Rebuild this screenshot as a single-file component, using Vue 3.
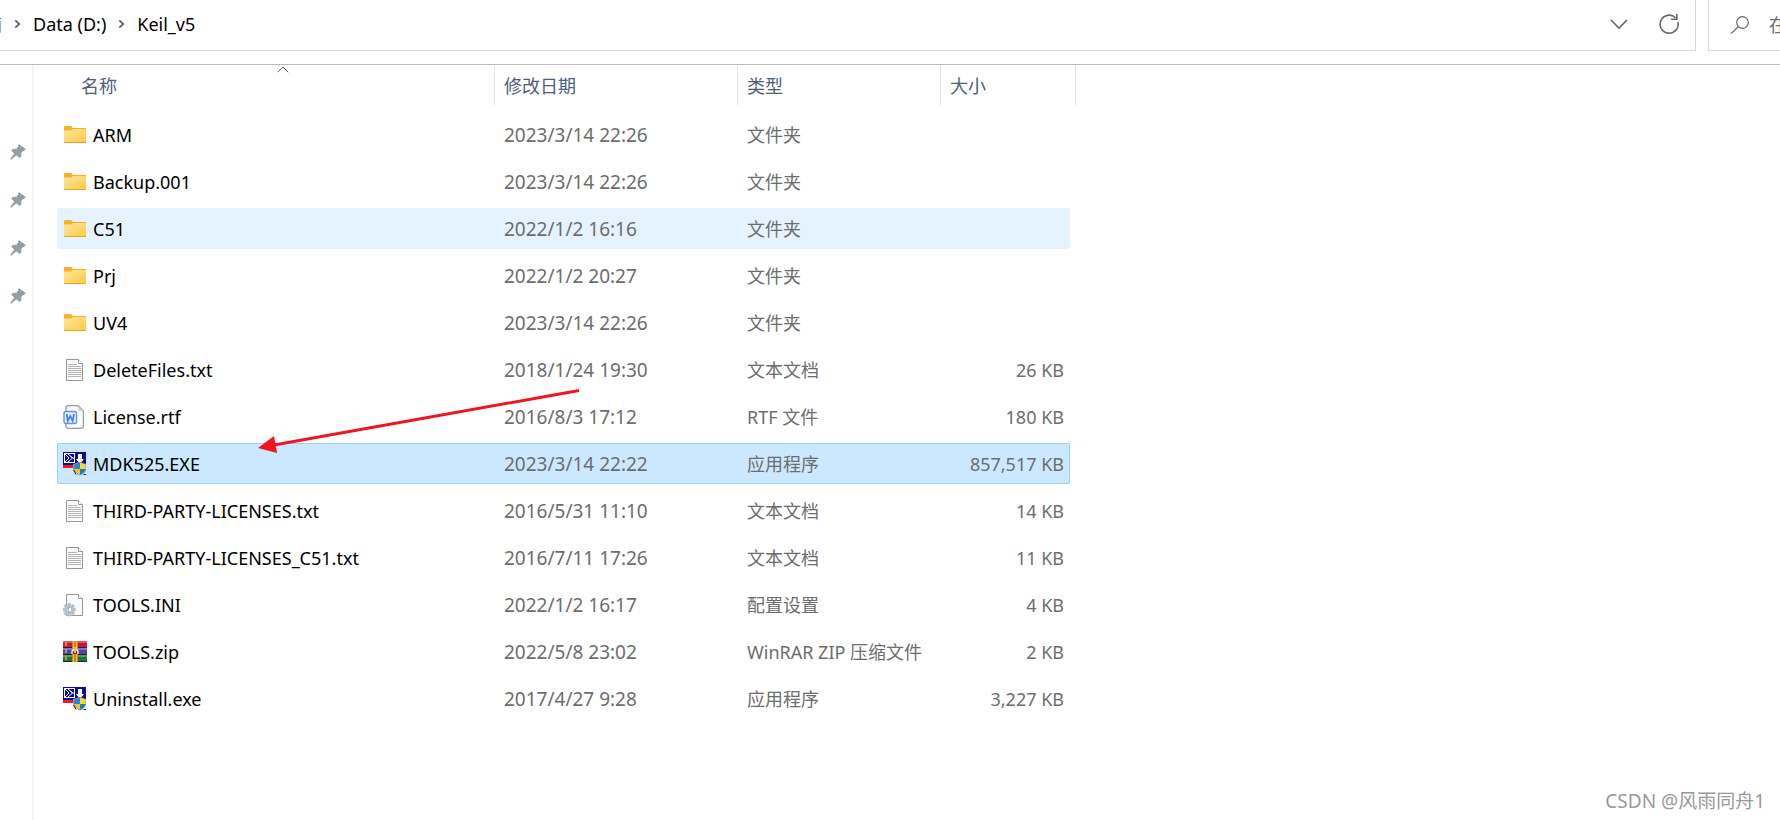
<script setup>
const files = [
  { name: 'ARM', date: '2023/3/14 22:26', type: '文件夹', size: '', icon: 'folder' },
  { name: 'Backup.001', date: '2023/3/14 22:26', type: '文件夹', size: '', icon: 'folder' },
  { name: 'C51', date: '2022/1/2 16:16', type: '文件夹', size: '', icon: 'folder', state: 'hovered' },
  { name: 'Prj', date: '2022/1/2 20:27', type: '文件夹', size: '', icon: 'folder' },
  { name: 'UV4', date: '2023/3/14 22:26', type: '文件夹', size: '', icon: 'folder' },
  { name: 'DeleteFiles.txt', date: '2018/1/24 19:30', type: '文本文档', size: '26 KB', icon: 'text' },
  { name: 'License.rtf', date: '2016/8/3 17:12', type: 'RTF 文件', size: '180 KB', icon: 'rtf' },
  { name: 'MDK525.EXE', date: '2023/3/14 22:22', type: '应用程序', size: '857,517 KB', icon: 'exe', state: 'selected' },
  { name: 'THIRD-PARTY-LICENSES.txt', date: '2016/5/31 11:10', type: '文本文档', size: '14 KB', icon: 'text' },
  { name: 'THIRD-PARTY-LICENSES_C51.txt', date: '2016/7/11 17:26', type: '文本文档', size: '11 KB', icon: 'text' },
  { name: 'TOOLS.INI', date: '2022/1/2 16:17', type: '配置设置', size: '4 KB', icon: 'ini' },
  { name: 'TOOLS.zip', date: '2022/5/8 23:02', type: 'WinRAR ZIP 压缩文件', size: '2 KB', icon: 'zip' },
  { name: 'Uninstall.exe', date: '2017/4/27 9:28', type: '应用程序', size: '3,227 KB', icon: 'exe' },
]
const gearAngles = [0, 45, 90, 135, 180, 225, 270, 315]
</script>

<template>
  <div class="window">
    <header class="toolbar">
      <div class="address">
        <nav class="crumbs" aria-label="路径">
          <button class="crumb crumb-cut" type="button">脑</button>
          <svg class="sep" viewBox="0 0 8 10"><path d="M1.5 1 L6 5 L1.5 9" /></svg>
          <button class="crumb" type="button">Data (D:)</button>
          <svg class="sep" viewBox="0 0 8 10"><path d="M1.5 1 L6 5 L1.5 9" /></svg>
          <button class="crumb" type="button">Keil_v5</button>
        </nav>
        <button class="tool" type="button" aria-label="历史记录">
          <svg width="20" height="20" viewBox="0 0 20 20"><path d="M2 6 L10 14 L18 6" /></svg>
        </button>
        <button class="tool" type="button" aria-label="刷新">
          <svg width="22" height="22" viewBox="0 0 22 22">
            <path d="M19.9 9 A9 9 0 1 1 17.5 4.8" />
            <path d="M18.8 1 V6.2 H13.2" />
          </svg>
        </button>
      </div>
      <label class="search">
        <svg width="20" height="20" viewBox="0 0 20 20">
          <circle cx="12.5" cy="7.5" r="5.8" />
          <path d="M8.3 11.7 L1 18.6" />
        </svg>
        <input type="text" placeholder="在" aria-label="搜索" />
      </label>
    </header>

    <div class="body">
      <aside class="sidebar">
        <svg v-for="n in 4" :key="n" class="pin" viewBox="0 0 16 16">
          <path d="M9 0.2 L15.8 5 L13.8 7.2 L12.8 7.2 L11 9.6 L11.3 12.3 L9.6 14 L6.3 11.2 L1.2 15.8 L0.2 15 L4.2 9.5 L1.2 6.5 L2.7 5 L6.4 4.8 L8.2 2.6 L7.9 1.3 Z" />
        </svg>
      </aside>

      <main class="content">
        <table class="list">
          <thead>
            <tr>
              <th class="name-head" scope="col">
                名称
                <svg class="sort" viewBox="0 0 12 7"><path d="M0.8 6.2 L6 1 L11.2 6.2" /></svg>
              </th>
              <th scope="col">修改日期</th>
              <th scope="col">类型</th>
              <th scope="col">大小</th>
            </tr>
          </thead>
          <tbody>
            <tr v-for="f in files" :key="f.name" :class="f.state">
              <td class="name">
                <svg v-if="f.icon === 'folder'" class="icon" viewBox="0 0 24 24">
                  <defs>
                    <linearGradient id="folder-face" x1="0" y1="0" x2="1" y2="1">
                      <stop offset="0" stop-color="#ffe6a0" />
                      <stop offset="1" stop-color="#fdca45" />
                    </linearGradient>
                  </defs>
                  <path d="M1 4 Q1 3 2 3 H7.5 Q8.6 3 9 4 L9.6 5 H23 V19 H1 Z" fill="#f9b21b" />
                  <path d="M1 7.4 H8 L9.6 6 H23 V19 H1 Z" fill="url(#folder-face)" />
                  <path d="M1 19.5 H23" stroke="#e8a52a" />
                </svg>
                <svg v-else-if="f.icon === 'text'" class="icon" viewBox="0 0 24 24">
                  <path d="M3.5 1.5 H15.5 L19.5 5.5 V22.5 H3.5 Z" fill="#fbfbfb" stroke="#969696" />
                  <path d="M15.5 1.5 V5.5 H19.5" fill="#fff" stroke="#969696" />
                  <path d="M5 6.5 H14 M5 8.5 H18 M5 10.5 H18 M5 12.5 H18 M5 14.5 H18 M5 16.5 H18 M5 18.5 H18" stroke="#b4b4b4" />
                </svg>
                <svg v-else-if="f.icon === 'rtf'" class="icon" viewBox="0 0 24 24">
                  <path d="M5 0.7 H15 L20.4 6 V21 Q20.4 23.3 18 23.3 H5.5 Q3 23.3 3 21 V3 Q3 0.7 5 0.7 Z" fill="#fcfcfc" stroke="#9a9a9a" stroke-width="1.3" />
                  <path d="M15 1 V4.5 Q15 6 16.5 6 H20.3 Z" fill="#d3d3d3" />
                  <rect x="1" y="6.5" width="12.5" height="12" rx="2" fill="#eaf2ff" stroke="#5b93f5" stroke-width="1.4" />
                  <path d="M3.7 9 L4.8 15.8 L7.2 11 L9.7 15.8 L11 9" fill="none" stroke="#3f7fef" stroke-width="1.8" />
                </svg>
                <svg v-else-if="f.icon === 'exe'" class="icon" viewBox="0 0 24 24">
                  <rect width="23" height="13" fill="#0a0aa0" />
                  <rect y="13" width="11" height="3" fill="#f01818" />
                  <rect x="1.5" y="1.5" width="10" height="9" fill="#0a0aa0" stroke="#fff" />
                  <path d="M2 2 L6 6 L2 10 M5 2 L9.5 6 L5 10 M7 4 L11 6.5" fill="none" stroke="#fff" />
                  <path d="M15 2 H19 V7 H21 L17 12 L13 7 H15 Z" fill="#fff" />
                  <path d="M15.5 4 H18.5 V7 H20 L17 10.5 L14 7 H15.5 Z" fill="#ffffb0" />
                  <path d="M10 12 L17 10 L23 12 V18 Q22 21.5 17 23.5 Q11.5 21 10 17 Z" fill="#8c9aa8" />
                  <path d="M11.5 12.5 L17 10.8 V17 H11.3 Z" fill="#2488d8" />
                  <path d="M17 10.8 L22.6 12.5 V17 H17 Z" fill="#ffd62e" />
                  <path d="M11.3 17 H17 V22.8 Q12.5 20.5 11.3 17 Z" fill="#f5c322" />
                  <path d="M17 17 H22.6 Q21.5 20.5 17 22.8 Z" fill="#1c7bc8" />
                  <path d="M10.5 18 L13 22.5 M20.5 22.5 H23" stroke="#222" />
                </svg>
                <svg v-else-if="f.icon === 'ini'" class="icon" viewBox="0 0 24 24">
                  <path d="M3.5 1.5 H15.5 L19.5 5.5 V22.5 H3.5 Z" fill="#fafafa" stroke="#969696" />
                  <path d="M15.5 1.5 V5.5 H19.5" fill="#fff" stroke="#969696" />
                  <g fill="#b7c5d0">
                    <rect v-for="a in gearAngles" :key="a" x="4.6" y="10" width="3.2" height="4" :transform="`rotate(${a} 6.2 16.7)`" />
                  </g>
                  <circle cx="6.2" cy="16.7" r="3.6" fill="#fff" stroke="#b3c1cc" stroke-width="3" />
                  <path d="M7 14 A2.8 2.8 0 0 0 7 19.4" fill="none" stroke="#8497a5" />
                </svg>
                <svg v-else class="icon" viewBox="0 0 24 24">
                  <rect y="1" width="24" height="7" fill="#c4183f" />
                  <rect y="1" width="24" height="2" fill="#e0506c" />
                  <rect y="8" width="24" height="7" fill="#4d44a8" />
                  <rect y="8" width="24" height="2" fill="#7d74cc" />
                  <rect y="15" width="24" height="7" fill="#147a3c" />
                  <rect y="15" width="24" height="2" fill="#3fa866" />
                  <path d="M0 7.5 H24 M0 14.5 H24 M0 21.5 H24" stroke="#3a1430" />
                  <path d="M3 2 V6 M3 9 V13 M3 16 V20" stroke="#f0a020" stroke-width="1.6" />
                  <rect x="9" y="1" width="6" height="21" fill="#d9801c" />
                  <path d="M10.5 1 V22 M13.5 1 V22" stroke="#f7b548" />
                  <path d="M9 14 V12 Q9 9.5 12 9.5 Q15 9.5 15 12 V14" fill="#5a3a20" stroke="#eee" stroke-width="1.4" />
                  <path d="M12 7 V13" stroke="#ffb93c" stroke-width="2" />
                </svg>
                <span>{{ f.name }}</span>
              </td>
              <td class="date">{{ f.date }}</td>
              <td>{{ f.type }}</td>
              <td class="size">{{ f.size }}</td>
            </tr>
          </tbody>
        </table>
      </main>
    </div>

    <svg class="arrow" width="324" height="66" viewBox="0 0 324 66">
      <path d="M321 2.5 L16 57" stroke="#ee161f" stroke-width="3" />
      <path d="M0 60 L16 48 L19 65 Z" fill="#ee161f" />
    </svg>
    <div class="watermark">CSDN @风雨同舟1</div>
  </div>
</template>

<style>
body {
  margin: 0;
  background: #fff;
}
</style>

<style scoped>
.window {
  position: relative;
  display: flex;
  flex-direction: column;
  min-height: 100vh;
  overflow: hidden;
  background: #fff;
  color: #000;
  font: 18px/24px "Noto Sans", "Noto Sans CJK SC", sans-serif;
}
button,
input {
  padding: 0;
  border: 0;
  background: none;
  color: inherit;
  font: inherit;
}
svg {
  display: block;
  flex: none;
}
.toolbar {
  display: flex;
  gap: 12px;
  height: 51px;
  margin-bottom: 13px;
}
.address {
  display: flex;
  flex: 1;
  align-items: center;
  gap: 29px;
  padding: 0 15px 2px 0;
  border: solid #d9d9d9;
  border-width: 0 1px 1px 0;
}
.crumbs {
  display: flex;
  flex: 1;
  align-items: center;
  gap: 12px;
}
.crumb {
  white-space: nowrap;
}
.crumb-cut {
  display: flex;
  justify-content: flex-end;
  width: 2px;
  overflow: hidden;
  color: #777;
}
.sep {
  width: 7px;
  height: 10px;
  fill: none;
  stroke: #666;
  stroke-width: 2;
}
.tool svg,
.search svg {
  fill: none;
  stroke: #666;
  stroke-width: 1.6;
}
.search {
  display: flex;
  align-items: center;
  gap: 19px;
  width: 72px;
  box-sizing: border-box;
  padding-left: 21px;
  border: solid #d9d9d9;
  border-width: 0 0 1px 1px;
}
.search svg {
  stroke-width: 1.2;
}
.search input {
  flex: 1;
  min-width: 0;
  outline: none;
}
.search input::placeholder {
  color: #6d6d6d;
  opacity: 1;
}
.body {
  display: flex;
  flex: 1;
  border-top: 1px solid #bbb;
}
.sidebar {
  display: flex;
  flex-direction: column;
  align-items: flex-end;
  gap: 32px;
  width: 32px;
  box-sizing: border-box;
  padding: 79px 6px 0 0;
}
.pin {
  width: 16px;
  height: 16px;
  fill: #949ea5;
}
.content {
  flex: 1;
  padding-left: 23px;
  border-left: 2px solid #f5f5f5;
}
.list,
.list thead {
  display: block;
}
.list tbody {
  display: flex;
  flex-direction: column;
  gap: 6px;
  margin-top: 9px;
}
.list tr {
  display: grid;
  grid-template-columns: 438px 243px 203px 129px;
  width: max-content;
  box-sizing: border-box;
  border-radius: 2px;
}
.list thead tr {
  grid-template-columns: 438px 243px 203px 135px;
}
th {
  position: relative;
  height: 40px;
  box-sizing: border-box;
  padding: 9px 9px 7px;
  border-right: 1px solid #e2e2e2;
  color: #4c607a;
  font-weight: 400;
  text-align: left;
}
.list .name-head {
  padding-left: 24px;
}
.sort {
  position: absolute;
  top: 1px;
  left: 220px;
  width: 12px;
  height: 7px;
  fill: none;
  stroke: #666;
}
td {
  height: 41px;
  box-sizing: border-box;
  padding: 9px 9px 8px;
  color: #6d6d6d;
  white-space: nowrap;
}
.list .name {
  display: flex;
  align-items: center;
  gap: 6px;
  padding: 8px 9px 8px 6px;
  color: #000;
}
.list .date {
  font-size: 19px;
}
.list .size {
  padding-right: 6px;
  text-align: right;
}
.icon {
  width: 24px;
  height: 24px;
}
.hovered {
  background: #e5f3ff;
}
.selected {
  background: #cce8ff;
  box-shadow: inset 0 0 0 1px #99d1ff;
}
.arrow {
  position: absolute;
  top: 388px;
  left: 258px;
}
.watermark {
  position: absolute;
  right: 15px;
  bottom: 7px;
  color: #999;
  font-size: 19px;
}
</style>
